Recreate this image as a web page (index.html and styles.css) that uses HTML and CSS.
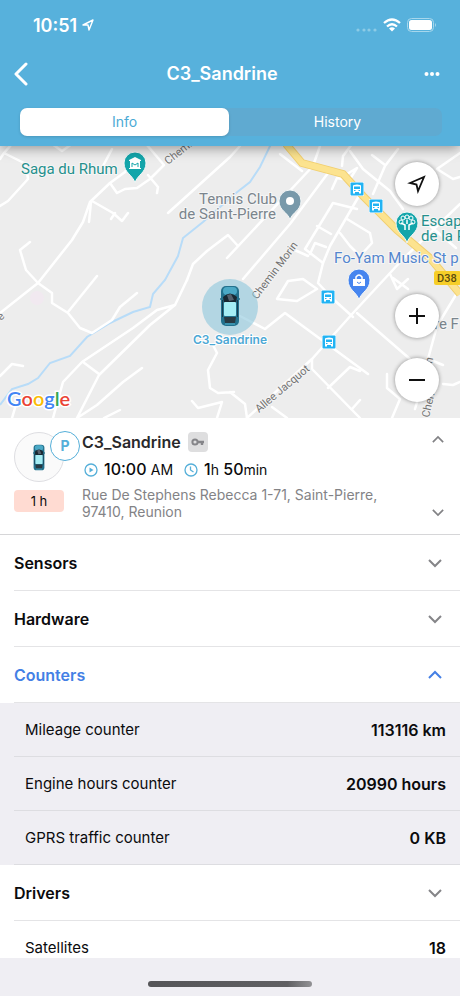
FILE: index.html
```html
<!DOCTYPE html>
<html lang="en">
<head>
<meta charset="utf-8">
<meta name="viewport" content="width=device-width, initial-scale=1">
<title>C3_Sandrine</title>
<link rel="stylesheet" href="styles.css">
</head>
<body>
<svg class="defs" width="0" height="0" aria-hidden="true">
  <defs>
    <symbol id="car" viewBox="0 0 20 42" preserveAspectRatio="none">
      <rect x="0" y="13" width="20" height="2" rx="1" fill="#24677f"/>
      <rect x="1" y="1" width="18" height="40" rx="5" fill="#23718d"/>
      <rect x="3" y="2" width="14" height="8" rx="4" fill="#4ba9c6"/>
      <path d="M3 12Q10 5 17 12l-1 6H4z" fill="#182832"/>
      <path d="M7 10l4-1 3 6-5 1z" fill="#56616d"/>
      <rect x="4" y="17" width="12" height="14" rx="1" fill="#a5edf4"/>
      <path d="M2 15h1v17H2zM17 15h1v17h-1z" fill="#173e50"/>
      <path d="M4 32h12l-1 6H5z" fill="#293a43"/>
      <path d="M5 39h10" stroke="#55b5cf" stroke-width="1"/>
    </symbol>
    <symbol id="down" viewBox="0 0 14 10"><path d="M1 2l6 6 6-6" fill="none" stroke="currentColor" stroke-width="2"/></symbol>
    <symbol id="up" viewBox="0 0 14 10"><path d="M1 8l6-6 6 6" fill="none" stroke="currentColor" stroke-width="2"/></symbol>
    <symbol id="bus" viewBox="0 0 14 14">
      <rect x="0" y="0" width="14" height="14" rx="1" fill="#fff"/>
      <rect x=".5" y=".5" width="13" height="13" rx="1" fill="#22b3f3"/>
      <path d="M3 4q0-1.500 4-1.500T11 4v6H3z" fill="#fff"/>
      <path d="M4 4.500h6v2.500H4z" fill="#22b3f3"/>
      <path d="M4 10v1.500M10 10v1.500" stroke="#fff" stroke-width="2"/>
      <path d="M4 8.500h1.500M8.500 8.500H10" stroke="#22b3f3"/>
    </symbol>
  </defs>
</svg>
<div class="app">
  <header class="top">
    <div class="status">
      <div class="clock">10:51
        <svg width="12" height="12" viewBox="0 0 12 12"><path d="M1 6L11 1 7 11 6 6Z" fill="none" stroke="#fff" stroke-width="1.400" stroke-linejoin="round"/></svg>
      </div>
      <div class="signals">
        <svg width="22" height="14" viewBox="0 0 22 14" fill="#8dcbe6"><circle cx="3" cy="12" r="1.600"/><circle cx="9" cy="12" r="1.600"/><circle cx="14" cy="12" r="1.600"/><circle cx="20" cy="12" r="1.600"/></svg>
        <svg width="18" height="14" viewBox="0 0 18 14" fill="none" stroke="#fff" stroke-width="2.300"><path d="M1 5Q9-2 17 5M4 8.500Q9 4 14 8.500"/><path d="M6 10.500Q9 8 12 10.500L9 13.500Z" fill="#fff" stroke="none"/></svg>
        <svg width="30" height="14" viewBox="0 0 30 14"><rect x=".5" y=".5" width="26" height="13" rx="4" fill="none" stroke="#a7d7ec"/><rect x="2" y="2" width="23" height="10" rx="2.500" fill="#fff"/><path d="M28 5q2 2 0 4z" fill="#a7d7ec"/></svg>
      </div>
    </div>
    <nav class="bar">
      <button class="plain" aria-label="Back"><svg width="14" height="24" viewBox="0 0 14 24"><path d="M12 2L2 12l10 10" fill="none" stroke="#fff" stroke-width="3" stroke-linecap="round" stroke-linejoin="round"/></svg></button>
      <h1>C3_Sandrine</h1>
      <button class="plain more" aria-label="More"><svg width="16" height="4" viewBox="0 0 16 4" fill="#fff"><circle cx="2.500" cy="2" r="2"/><circle cx="8" cy="2" r="2"/><circle cx="13.500" cy="2" r="2"/></svg></button>
    </nav>
    <div class="tabs" role="tablist">
      <button class="tab active" role="tab" aria-selected="true">Info</button>
      <button class="tab" role="tab" aria-selected="false">History</button>
    </div>
  </header>

  <section class="map" aria-label="Map">
    <svg class="canvas" viewBox="0 146 460 272" preserveAspectRatio="xMidYMid slice">
      <rect x="0" y="146" width="460" height="272" fill="#ededed"/>
      <circle cx="37" cy="298" r="7" fill="#f1e9f0"/>
      <path class="river" d="M271 144L260 167 250 182 236 193 203 222 183 238 178 256 165 280 153 294 150 307 133 312 110 323 87 337 70 356 50 363 38 378 28 384 12 389 0 405"/>
      <g class="road">
        <path d="M38 283L72 240 83 222 90 202 110 183 125 172 M0 313L38 283"/>
        <path d="M110 183l7 10 8-4 12-1 13-9 14-14-17-20M148 175l10 12-1 6M91 202l-2 20M92 201l21 12 9 8 6-8M111 219l4-6"/>
        <path d="M0 206l8-5 20-22-2-15L4 153 12 144M4 153l-4 6M52 144l10 7 10-7M103 166l9-17M125 172l10-15"/>
        <path d="M30 242l-10 8 6 20 12 13 14 10v10l16 10 12 15 12 5 20-13 8-13 17-14M68 312L97 276"/>
        <path d="M168 213L230 157 240 146M187 280l-12 25-25 20-51 50-22 43M175 305l-18 5-24 18-51 34-19 20-10 36M83 362l16 12M142 368l-19 14-26 23-20 13M0 376l12-12 11 2M15 408l-3 10M120 410l-16 8"/>
        <path d="M213 345l4 8-9 17 2 18 8 5 16-1M192 401l6 7 24-6-5 16M230 392l15 12 2 14M272 407l15 11"/>
        <path d="M313 166L227 258M328 173l-38 51-47 55M238 246l-10-11-21 16-14 13-6 16M280 154l22 17M313 166l7-20M332 189l5-11 5 1M347 174l10-6-7 11M342 166l1-10 9-12"/>
        <path d="M350 151l13 18 27 22 13 18M398 149l-13 17-12 28M385 165l-13-10M460 153l-23 16 16 10 7-2"/>
        <path d="M333 203l-28 46 18 14 7-17 33-57M333 203l24 6M290 248l18 8M310 254l5-11 11 4M317 226l14 8M347 219l23 14 2 10-12 13-10-10-10-13"/>
        <path d="M323 263l-5 20 15 16 20 18M277 299l11-18 15-2 14 10-20 12zM460 204L403 259 353 313 312 359 247 418"/>
        <path d="M240 316l25 13 20-16 83 61M357 313l53 46M312 359v10l48 49M328 388l22-21 10 4M352 409l8-9M387 374v14l13 11-8 19M390 274l7 15 11-10M393 278l15 11"/>
        <path d="M457 293l-20 33-9 33 15 6M430 359l-15 50M443 384l10 1 7-3M421 218l35 30M413 360l14 5"/>
      </g>
      <path class="main-edge" d="M286 144l16 19 41 11 20 22 34 34 33 28 30 36"/>
      <path class="main-road" d="M286 144l16 19 41 11 20 22 34 34 33 28 30 36"/>
      <g class="street">
        <text transform="translate(168 165) rotate(-38)">Chemi...</text>
        <text transform="translate(257 300) rotate(-53)">Chemin Morin</text>
        <text transform="translate(259 413) rotate(-40)">Allee Jacquot</text>
        <text transform="translate(429 418) rotate(-77)">Chen</text>
        <text transform="translate(432 364) rotate(-77)">n</text>
        <text transform="translate(1 321) rotate(-45)">e</text>
      </g>
      <g class="place">
        <text x="21" y="174" fill="#25908d">Saga du Rhum</text>
        <g fill="#7b858d"><text x="277" y="204" text-anchor="end">Tennis Club</text><text x="276" y="219" text-anchor="end">de Saint-Pierre</text><text x="434" y="329">re F</text></g>
        <g fill="#25908d"><text x="421" y="226">Escap</text><text x="421" y="241">de la P</text></g>
        <text x="334" y="263" fill="#5486ce">Fo-Yam Music St p</text>
      </g>
      <g stroke="#f4f7f7" stroke-width="1">
        <path d="M135 183c-2-8-11-10-11-20a11 11 0 0 1 22 0c0 10-9 12-11 20z" fill="#13a5aa"/>
        <path d="M290 220c-2-8-11-9-11-19a11 11 0 0 1 22 0c0 10-9 11-11 19z" fill="#7899aa"/>
        <path d="M407 243c-2-8-11-10-11-20a11 11 0 0 1 22 0c0 10-9 12-11 20z" fill="#13a5aa"/>
        <path d="M359 300c-2-8-11-10-11-20a11 11 0 0 1 22 0c0 10-9 12-11 20z" fill="#4685ef"/>
      </g>
      <circle cx="290" cy="201" r="4" fill="#fff"/>
      <path d="M129 160l6-3 6 3v1h-12zM130 161h10v7h-10zM129 168h12v1h-12z" fill="#fff"/><path d="M132 167v-4l3 2 3-2v4" fill="none" stroke="#13a5aa"/>
      <path d="M353 279h12v7h-12z" fill="#fff"/><path d="M356 279v-2q3-4 6 0v2" fill="none" stroke="#fff" stroke-width="1.500"/><path d="M357 282q2 3 4 0" fill="none" stroke="#4685ef"/>
      <path d="M405 230v-5l-4-2M409 230v-5l4-2M407 224v-4" stroke="#fff" stroke-width="1.500" fill="none"/><g fill="none" stroke="#fff"><circle cx="401" cy="222" r="2"/><circle cx="403" cy="218" r="2"/><circle cx="407" cy="217" r="2"/><circle cx="411" cy="218" r="2"/><circle cx="413" cy="222" r="2"/></g>
      <use href="#bus" x="350" y="182" width="14" height="14"/><use href="#bus" x="369" y="199" width="14" height="14"/><use href="#bus" x="321" y="290" width="14" height="14"/><use href="#bus" x="322" y="335" width="14" height="14"/>
      <rect x="434" y="271" width="27" height="14" rx="2" fill="#f6ce28"/><text class="shield" x="437" y="282">D38</text>
      <circle cx="230" cy="307" r="28" fill="#8cc7dc" fill-opacity=".6"/>
      <use href="#car" x="220" y="285" width="20" height="42"/>
      <text class="unit" x="230" y="344" text-anchor="middle">C3_Sandrine</text>
      <text class="google" x="7" y="406"><tspan fill="#4285f4">G</tspan><tspan fill="#ea4335">o</tspan><tspan fill="#fbbc05">o</tspan><tspan fill="#4285f4">g</tspan><tspan fill="#34a853">l</tspan><tspan fill="#ea4335">e</tspan></text>
    </svg>
    <div class="controls">
      <button class="round locate" aria-label="My location"><svg width="20" height="20" viewBox="0 0 20 20"><path d="M3 9L17 3 11 17 9.500 10.500Z" fill="none" stroke="#111" stroke-width="1.800"/></svg></button>
      <button class="round" aria-label="Zoom in"><svg width="18" height="18" viewBox="0 0 18 18"><path d="M1 9h16M9 1v16" stroke="#111" stroke-width="2"/></svg></button>
      <button class="round" aria-label="Zoom out"><svg width="18" height="18" viewBox="0 0 18 18"><path d="M1 9h16" stroke="#111" stroke-width="2"/></svg></button>
    </div>
  </section>

  <section class="summary">
    <div class="side">
      <div class="avatar"><svg width="12" height="27"><use href="#car"/></svg><span class="parking">P</span></div>
      <span class="tag">1 h</span>
    </div>
    <div class="details">
      <h2>C3_Sandrine
        <span class="key"><svg width="14" height="10" viewBox="0 0 14 10"><circle cx="4" cy="5" r="2.600" fill="none" stroke="#858589" stroke-width="2"/><path d="M6 5h7M11 5v3" stroke="#858589" stroke-width="2.400"/></svg></span>
      </h2>
      <p class="times">
        <svg width="14" height="14" viewBox="0 0 14 14"><circle cx="7" cy="7" r="6" fill="none" stroke="#55afd9" stroke-width="1.300"/><path d="M5.500 4.500v5L9.500 7z" fill="#55afd9"/></svg>
        <span>10:00 <small>AM</small></span>
        <svg class="second" width="14" height="14" viewBox="0 0 14 14"><circle cx="7" cy="7" r="6" fill="none" stroke="#55afd9" stroke-width="1.300"/><path d="M6.500 3.500V7l3 2" fill="none" stroke="#55afd9" stroke-width="1.300"/></svg>
        <span>1<small>h</small> 50<small>min</small></span>
      </p>
      <p class="address">Rue De Stephens Rebecca 1-71, Saint-Pierre, 97410, Reunion</p>
    </div>
    <div class="steps">
      <button class="plain" aria-label="Previous"><svg width="12" height="9"><use href="#up"/></svg></button>
      <button class="plain" aria-label="Next"><svg width="12" height="9"><use href="#down"/></svg></button>
    </div>
  </section>

  <main class="list">
    <button class="section" aria-expanded="false"><span>Sensors</span><svg width="14" height="10"><use href="#down"/></svg></button>
    <button class="section" aria-expanded="false"><span>Hardware</span><svg width="14" height="10"><use href="#down"/></svg></button>
    <button class="section open" aria-expanded="true"><span>Counters</span><svg width="14" height="10"><use href="#up"/></svg></button>
    <dl class="values shaded">
      <div class="row"><dt>Mileage counter</dt><dd>113116 km</dd></div>
      <div class="row"><dt>Engine hours counter</dt><dd>20990 hours</dd></div>
      <div class="row"><dt>GPRS traffic counter</dt><dd>0 KB</dd></div>
    </dl>
    <button class="section" aria-expanded="false"><span>Drivers</span><svg width="14" height="10"><use href="#down"/></svg></button>
    <dl class="values">
      <div class="row"><dt>Satellites</dt><dd>18</dd></div>
    </dl>
  </main>
  <footer class="home"><span></span></footer>
</div>
</body>
</html>
```
FILE: styles.css
```css
* { box-sizing: border-box; }
body { margin: 0; font-family: Inter, "Liberation Sans", sans-serif; color: #0b0b0d; background: #fff; }
h1, h2, p, dl, dd { margin: 0; }
button { font: inherit; color: inherit; border: 0; margin: 0; padding: 0; background: none; cursor: pointer; }
svg { display: block; flex: none; }
.defs { position: absolute; }
.app { height: 100vh; display: flex; flex-direction: column; overflow: hidden; }
.top { flex: none; background: #57b1dc; color: #fff; padding-bottom: 10px; position: relative; z-index: 1; box-shadow: 0 2px 12px rgba(0, 0, 0, .4); }
.status { height: 50px; padding: 0 23px 0 33px; display: flex; align-items: center; justify-content: space-between; }
.clock { display: flex; align-items: center; gap: 5px; font-size: 18px; font-weight: 600; }
.signals { display: flex; align-items: center; gap: 6px; }
.bar { height: 48px; padding: 0 20px 0 14px; display: grid; grid-template-columns: 34px 1fr 44px; align-items: center; }
.plain { display: flex; align-items: center; }
.more { justify-content: flex-end; }
h1 { text-align: center; font-size: 18px; line-height: 24px; font-weight: 600; }
.tabs { margin: 10px 18px 0 20px; height: 28px; display: flex; gap: 4px; border-radius: 7px; background: #5faad1; }
.tab { flex: 1; font-size: 14px; line-height: 28px; border-radius: 7px; font-weight: 400; }
.tab.active { background: #fff; color: #4caad5; box-shadow: 0 1px 3px rgba(0, 0, 0, .15); }

.map { flex: none; height: 272px; position: relative; overflow: hidden; }
.canvas { width: 100%; height: 100%; }
.road { fill: none; stroke: #fff; stroke-width: 2.5; stroke-linejoin: round; stroke-linecap: round; }
.river { fill: none; stroke: #b8dcf8; stroke-width: 2; }
.main-edge { fill: none; stroke: #f1cf70; stroke-width: 8; }
.main-road { fill: none; stroke: #fce38f; stroke-width: 6; }
.street { font: 11px Roboto, sans-serif; fill: #737373; stroke: #f3f3f3; stroke-width: 2px; paint-order: stroke; }
.place { font: 15px Roboto, sans-serif; stroke: #f6f6f6; stroke-width: 2px; paint-order: stroke; }
.shield { font: 500 11px Roboto, sans-serif; fill: #5b4c10; }
.unit { font: 600 12px Inter, sans-serif; fill: #4da8d5; stroke: #fff; stroke-width: 2px; paint-order: stroke; }
.google { font: 600 20px Lato, sans-serif; stroke: #fff; stroke-width: 3px; paint-order: stroke; }
.controls { position: absolute; top: 16px; right: 21px; display: flex; flex-direction: column; gap: 20px; }
.round { width: 44px; height: 44px; border-radius: 50%; background: #fff; display: grid; place-items: center; box-shadow: 0 0 4px rgba(0, 0, 0, .4); }
.locate { margin-bottom: 68px; }

.summary { flex: none; display: flex; padding: 14px 14px; border-bottom: 1px solid #d6d6d8; }
.side { width: 68px; flex: none; }
.avatar { width: 50px; height: 50px; border-radius: 50%; border: 1px solid #dedee2; background: #fafafa; display: grid; place-items: center; position: relative; }
.parking { position: absolute; top: -2px; left: 35px; width: 30px; height: 30px; border: 1px solid #55afd9; border-radius: 50%; background: #fff; color: #55afd9; font-size: 14px; font-weight: 700; line-height: 28px; text-align: center; }
.tag { display: block; width: 50px; height: 22px; margin-top: 8px; border-radius: 4px; background: #ffdbd2; font-size: 13px; line-height: 22px; text-align: center; }
.details { flex: 1; min-width: 0; }
h2 { display: flex; align-items: center; gap: 7px; font-size: 16px; line-height: 20px; font-weight: 600; color: #29292b; }
.key { width: 20px; height: 20px; border-radius: 4px; background: #dededf; display: grid; place-items: center; }
.times { display: flex; align-items: center; gap: 6px; margin: 7px 0 6px 2px; font-size: 16px; line-height: 20px; font-weight: 500; }
.times small { font-size: 14px; font-weight: 400; }
.second { margin-left: 5px; }
.address { max-width: 310px; font-size: 14px; line-height: 17px; color: #838386; }
.steps { display: flex; flex-direction: column; justify-content: space-between; color: #828285; padding: 3px 2px 3px 0; }

.list { flex: 1; min-height: 0; overflow: hidden; }
.section { width: calc(100% - 14px); height: 56px; margin-left: 14px; padding-right: 18px; display: flex; align-items: center; justify-content: space-between; border-bottom: 1px solid #e4e4e6; font-size: 16px; font-weight: 600; color: #0b0b0d; }
.section svg { color: #858588; }
.section.open, .section.open svg { color: #447fe5; }
.shaded { background: #efeef3; }
.row { height: 54px; margin-left: 14px; padding: 0 14px 0 11px; display: flex; align-items: center; justify-content: space-between; border-bottom: 1px solid #dddde1; font-size: 15px; }
dd { font-size: 16px; font-weight: 600; }
.home { flex: none; height: 38px; background: #efeef3; display: flex; justify-content: center; align-items: center; padding-top: 14px; }
.home span { width: 164px; height: 6px; border-radius: 3px; background: linear-gradient(90deg, #555558, #606063 85%, #929295); }
```
